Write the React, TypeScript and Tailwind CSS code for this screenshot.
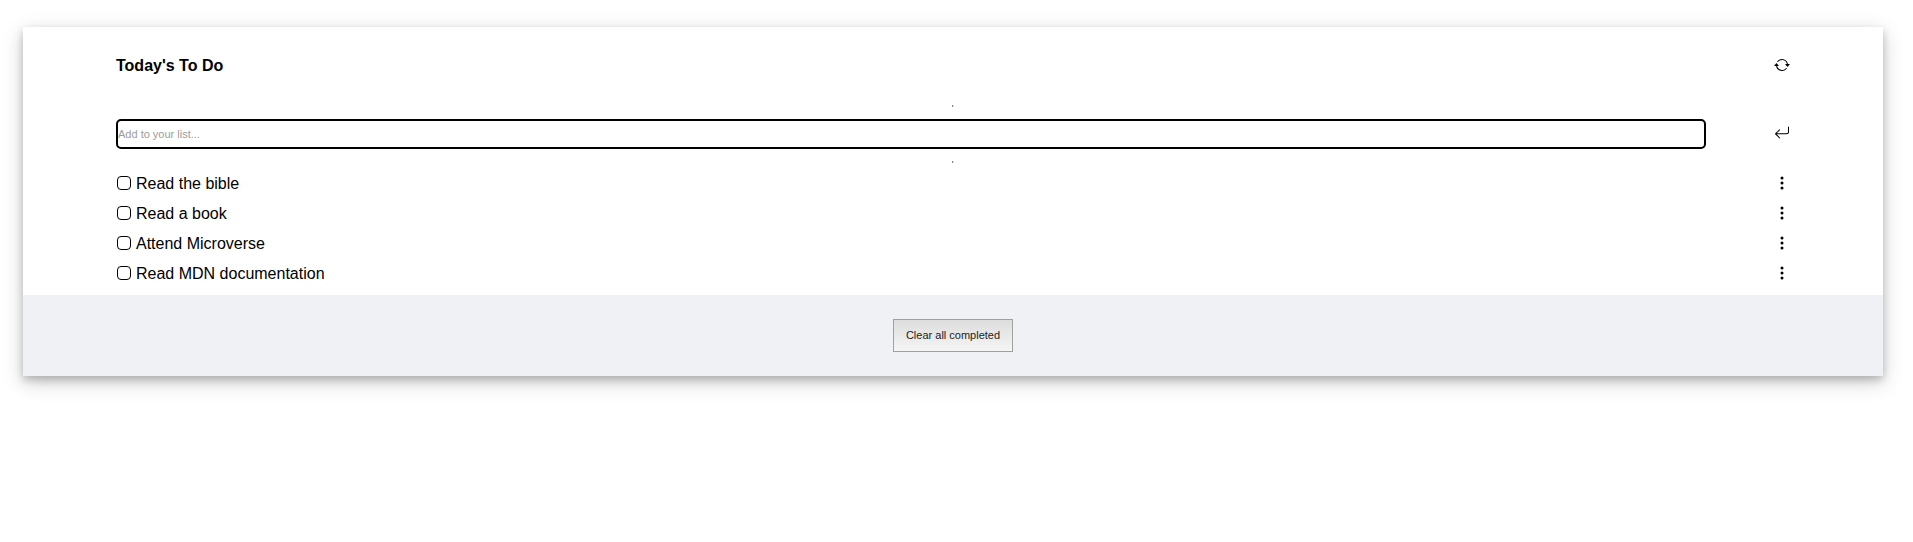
import { BsArrowRepeat, BsArrowReturnLeft, BsThreeDotsVertical } from 'react-icons/bs';

const tasks: string[] = [
  'Read the bible',
  'Read a book',
  'Attend Microverse',
  'Read MDN documentation',
];

function Divider({ className }: { className: string }) {
  return <hr className={`mx-auto h-0.5 w-0.5 border-0 border-l border-[#888] bg-[#ddd] ${className}`} />;
}

function TaskRow({ id, label }: { id: string; label: string }) {
  return (
    <li className="flex h-[30px] items-center justify-between">
      <div className="flex items-center gap-[5px] pl-px">
        <input
          id={id}
          type="checkbox"
          className="size-3.5 appearance-none rounded-[4px] border border-black bg-white checked:bg-black"
        />
        <label htmlFor={id} className="pt-0.5 leading-6">
          {label}
        </label>
      </div>
      <button type="button" aria-label={`Options for ${label}`}>
        <BsThreeDotsVertical size={16} />
      </button>
    </li>
  );
}

export default function App() {
  return (
    <main className="pt-[27px] pr-[30px] pb-8 pl-[23px] font-['Liberation_Sans',Arial,sans-serif] text-base text-black">
      <section className="bg-white shadow-[0_4px_8px_0_rgba(0,0,0,0.2),0_6px_20px_0_rgba(0,0,0,0.19)]">
        <div className="px-[5%] pb-[7px]">
          <header className="flex items-center justify-between py-[25px]">
            <h1 className="pt-0.5 leading-6 font-bold">Today's To Do</h1>
            <button type="button" aria-label="Refresh list">
              <BsArrowRepeat size={16} />
            </button>
          </header>
          <Divider className="mt-0.5" />
          <form className="mt-3 flex items-center gap-[68px]" onSubmit={(e) => e.preventDefault()}>
            <input
              type="text"
              aria-label="Add to your list"
              placeholder="Add to your list..."
              className="h-[30px] min-w-0 flex-1 rounded-[5px] border-2 border-black bg-white text-[11px] outline-none placeholder:text-[#9c9c9c]"
            />
            <button type="submit" aria-label="Add task" className="pb-0.5">
              <BsArrowReturnLeft size={16} />
            </button>
          </form>
          <Divider className="mt-3" />
          <ul className="mt-[5px]">
            {tasks.map((task, i) => (
              <TaskRow key={task} id={`task-${i}`} label={task} />
            ))}
          </ul>
        </div>
        <footer className="flex justify-center bg-[#f0f1f5] py-6">
          <button
            type="button"
            className="h-[33px] border border-[#a0a0a0] bg-linear-to-b from-[#dddddd] to-[#f5f5f5] px-3 text-[11px] text-[#222]"
          >
            Clear all completed
          </button>
        </footer>
      </section>
    </main>
  );
}
